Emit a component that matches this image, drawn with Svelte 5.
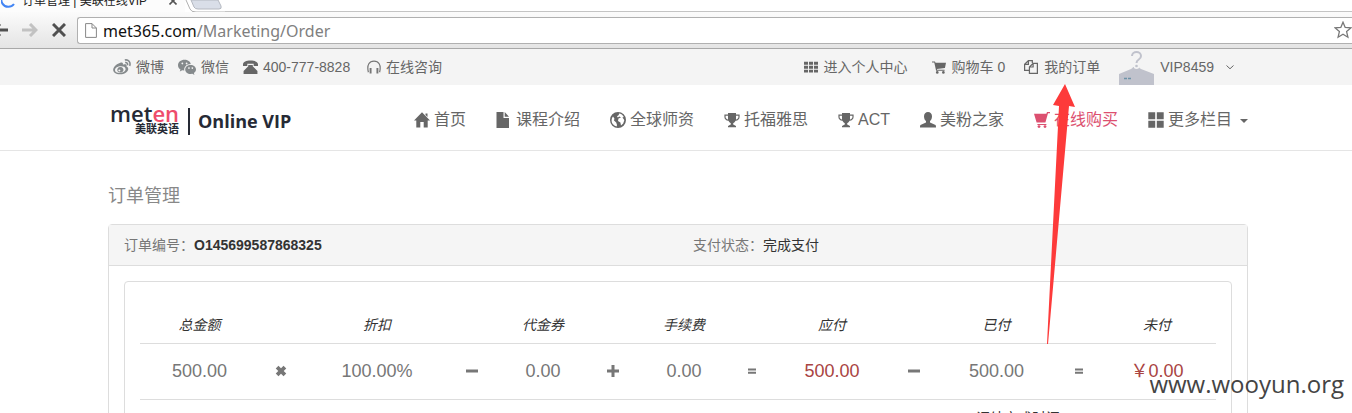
<script>
  const nav = [
    { icon: 'home', label: '首页' },
    { icon: 'file', label: '课程介绍' },
    { icon: 'globe', label: '全球师资' },
    { icon: 'trophy', label: '托福雅思' },
    { icon: 'trophy', label: 'ACT' },
    { icon: 'user', label: '美粉之家' },
    { icon: 'cart', label: '在线购买', active: true },
    { icon: 'large', label: '更多栏目', more: true }
  ];

  const columns = [
    { width: 119, head: '总金额', value: '500.00' },
    { width: 44, op: 'times' },
    { width: 148, head: '折扣', value: '100.00%' },
    { width: 42, op: 'minus' },
    { width: 100, head: '代金券', value: '0.00' },
    { width: 40, op: 'plus' },
    { width: 102, head: '手续费', value: '0.00' },
    { width: 34, op: 'equals' },
    { width: 126, head: '应付', value: '500.00', due: true },
    { width: 38, op: 'minus' },
    { width: 127, head: '已付', value: '500.00' },
    { width: 38, op: 'equals' },
    { width: 118, head: '未付', value: '￥0.00', due: true }
  ];
</script>

{#snippet icon(name)}
  <svg class="icon {name}" viewBox="0 0 16 16" aria-hidden="true">
    {#if name === 'home'}
      <path d="M8 0.3 L16 8.6 H13.7 V15.5 H9.7 V10 H6.3 V15.5 H2.3 V8.6 H0 Z M11.5 1.5 H13.5 V5 L11.5 3 Z" />
    {:else if name === 'file'}
      <path d="M0.5 0 H7.5 V6 H13 V16 H0.5 Z M8.7 0 L13 4.8 H8.7 Z" />
    {:else if name === 'globe'}
      <path fill-rule="evenodd" d="M8 0 A8 8 0 1 0 8 16 A8 8 0 1 0 8 0 Z M9 1.6 C11 1.8 13 3.2 13.8 5 L12.4 5.6 L13.6 7 L14.3 8.2 L13.2 11.4 L11 13.4 L10.4 10.6 L8 9 L8.5 6.6 L11 5.5 L9.4 4.6 L7.8 5.4 L7 4.2 L8.8 3 Z M3 4.6 L4.4 6.6 L4 8.6 L6.2 10.4 L7 13 L6.6 14.4 C3.4 13.6 1.4 11 1.6 8 C1.7 6.7 2.2 5.5 3 4.6 Z" />
    {:else if name === 'trophy'}
      <path fill-rule="evenodd" d="M4 1 H12 V2.6 H15.6 V5 C15.6 7 14 8.6 11.6 8.8 C11 10 10.2 10.8 9.2 11.2 V12.6 L12 14 V15.2 H4 V14 L6.8 12.6 V11.2 C5.8 10.8 5 10 4.4 8.8 C2 8.6 0.4 7 0.4 5 V2.6 H4 Z M1.6 3.8 V5 C1.6 6.3 2.6 7.2 4 7.5 V3.8 Z M14.4 3.8 H12 V7.5 C13.4 7.2 14.4 6.3 14.4 5 Z" />
    {:else if name === 'user'}
      <path d="M8 0 C10.4 0 12 1.7 12 4.2 C12 6.4 11.2 8.2 10 9 V10.6 L15 12.8 C15.8 13.2 16 13.8 16 15.4 H0 C0 13.8 0.2 13.2 1 12.8 L6 10.6 V9 C4.8 8.2 4 6.4 4 4.2 C4 1.7 5.6 0 8 0 Z" />
    {:else if name === 'cart'}
      <path d="M0 1.8 H12.4 L13 0 H16 V1.3 H14 L11.4 10.6 H2.6 Z M3.4 12 H12.4 V13 H3.4 Z" />
      <circle cx="5" cy="14.6" r="1.4" /><circle cx="11" cy="14.6" r="1.4" />
    {:else if name === 'large'}
      <path d="M0.3 0.3 H7.2 V7.2 H0.3 Z M8.8 0.3 H15.7 V7.2 H8.8 Z M0.3 8.8 H7.2 V15.7 H0.3 Z M8.8 8.8 H15.7 V15.7 H8.8 Z" />
    {:else if name === 'grid'}
      <path d="M0 2H4.6V5.4H0ZM5.7 2H10.3V5.4H5.7ZM11.4 2H16V5.4H11.4ZM0 6.5H4.6V9.9H0ZM5.7 6.5H10.3V9.9H5.7ZM11.4 6.5H16V9.9H11.4ZM0 11H4.6V14.4H0ZM5.7 11H10.3V14.4H5.7ZM11.4 11H16V14.4H11.4Z" />
    {:else if name === 'basket'}
      <path d="M0 1.6 H3.4 L4 3.2 H16 L14.8 9 L5.6 10.2 L5.9 11.2 H14.4 V12.4 H4.7 L2.6 2.8 H0 Z" />
      <circle cx="6" cy="14.2" r="1.5" /><circle cx="13" cy="14.2" r="1.5" />
    {:else if name === 'copy'}
      <path class="line" d="M9.5 3.5 V0.7 H5 L0.7 5 V11.8 H6.2 M5 0.7 V5 H0.7 M6.2 15.3 V8 L10.4 3.8 H15.3 V15.3 Z M10.4 3.8 V8 H6.2" />
    {:else if name === 'phone'}
      <path d="M0 4.6 C0 2 3.6 0.6 8 0.6 S16 2 16 4.6 V6.4 H11.4 V4 H4.6 V6.4 H0 Z M5.6 5.2 H10.4 V6.6 L15.4 11.6 V15 H0.6 V11.6 L5.6 6.6 Z" />
    {:else if name === 'headphones'}
      <path class="line" d="M1.6 14 C-0.6 5 3 1.2 8 1.2 S16.6 5 14.4 14" />
      <path d="M3 9 H5.2 V15.4 H3 Z M10.8 9 H13 V15.4 H10.8 Z" />
    {:else if name === 'weibo'}
      <path fill-rule="evenodd" d="M6.5 4.2 C8 3.6 9.2 4.2 8.8 6 C11 5.2 12.6 5.8 12 7.6 C14 8.4 14 10.4 12.6 12 C10.6 14.4 6 15.2 3 14 C0 12.8 -0.6 10.4 1 8 C2.4 6 4.5 4.9 6.5 4.2 Z M7 7.4 C4 7.4 1.8 8.9 1.8 10.8 S4 13.4 6.6 13.2 S11.4 11.6 11.2 9.8 S9.4 7.4 7 7.4 Z" />
      <path fill-rule="evenodd" d="M6.5 8 A2.8 2.5 0 1 0 6.6 8 Z M5.6 10.2 A0.9 0.8 0 1 0 5.7 10.2 Z" />
      <path class="line" d="M10.5 1.8 C13.6 1 16 4 14.8 7 M10.8 4.1 C12.4 3.7 13.4 5 12.8 6.4" />
    {:else if name === 'wechat'}
      <path fill-rule="evenodd" d="M5.8 1.6 C2.6 1.6 0 3.7 0 6.4 C0 8 0.8 9.3 2.2 10.2 L1.6 12 L3.8 10.9 L5.6 11.2 C5 8 7.6 5.4 11.4 5.4 C11 3.2 8.6 1.6 5.8 1.6 Z M3.8 4 A0.8 0.8 0 1 0 3.9 4 Z M7.6 4 A0.8 0.8 0 1 0 7.7 4 Z" />
      <path fill-rule="evenodd" d="M11.2 6.2 C8.4 6.2 6.4 8 6.4 10.2 S8.4 14.2 11.2 14.2 L12.8 14 L14.6 15 L14.1 13.4 C15.3 12.6 16 11.5 16 10.2 C16 8 13.9 6.2 11.2 6.2 Z M9.7 8.3 A0.7 0.7 0 1 0 9.8 8.3 Z M12.7 8.3 A0.7 0.7 0 1 0 12.8 8.3 Z" />
    {:else if name === 'chevron'}
      <path class="line" d="M1 5 L8 11.5 L15 5" />
    {:else if name === 'times'}
      <path d="M4.6 1 L8 4.4 L11.4 1 L15 4.6 L11.6 8 L15 11.4 L11.4 15 L8 11.6 L4.6 15 L1 11.4 L4.4 8 L1 4.6 Z" />
    {:else if name === 'minus'}
      <path d="M0 6 H16 V10 H0 Z" />
    {:else if name === 'plus'}
      <path d="M0 6 H6 V0 H10 V6 H16 V10 H10 V16 H6 V10 H0 Z" />
    {:else if name === 'equals'}
      <path d="M0 3 H16 V7 H0 Z M0 9.6 H16 V13.6 H0 Z" />
    {/if}
  </svg>
{/snippet}

<div class="page">
  <div class="tabs">
    <svg class="spinner" viewBox="0 0 16 16" aria-hidden="true"><path d="M6 1 A7 7 0 1 0 13 12" /></svg>
    <span class="tab-title">订单管理 | 美联在线VIP</span>
    <button class="tab-close" aria-label="关闭标签页">
      <svg viewBox="0 0 8 8"><path d="M0.5 0.5 L7.5 7.5 M7.5 0.5 L0.5 7.5" /></svg>
    </button>
    <svg class="tab-edge" viewBox="0 0 40 13" aria-hidden="true">
      <path class="new" d="M6 0 L9 7 Q10 9 13 9 H34 Q37 9 36 6 L33 0 Z" />
      <path class="edge" d="M1 0 L5 9 Q6 12 11 12 H40" />
    </svg>
    <span class="strip"></span>
  </div>

  <div class="toolbar">
    <button class="tool back" aria-label="后退"><svg viewBox="0 0 16 14"><path d="M16 7 H2 M8 1 L2 7 L8 13" /></svg></button>
    <button class="tool forward" aria-label="前进"><svg viewBox="0 0 16 14"><path d="M0 7 H14 M8 1 L14 7 L8 13" /></svg></button>
    <button class="tool stop" aria-label="停止"><svg viewBox="0 0 14 14"><path d="M1 1 L13 13 M13 1 L1 13" /></svg></button>
    <div class="address">
      <svg class="doc" viewBox="0 0 12 15" aria-hidden="true"><path d="M0.6 0.6 H7 L11.4 5 V14.4 H0.6 Z M7 0.6 V5 H11.4" /></svg>
      <span class="url">met365.com<span>/Marketing/Order</span></span>
      <svg class="star" viewBox="0 0 18 18" aria-hidden="true"><path d="M9 1.2 L11.2 6.4 L16.8 6.9 L12.6 10.6 L13.9 16.2 L9 13.3 L4.1 16.2 L5.4 10.6 L1.2 6.9 L6.8 6.4 Z" /></svg>
    </div>
  </div>

  <div class="topbar">
    <div class="container bar">
      <div class="contacts">
        <a href="#weibo">{@render icon('weibo')}微博</a>
        <a href="#wechat">{@render icon('wechat')}微信</a>
        <a href="#phone">{@render icon('phone')}<span class="number">400-777-8828</span></a>
        <a href="#consult">{@render icon('headphones')}在线咨询</a>
      </div>
      <div class="account">
        <a href="#center">{@render icon('grid')}进入个人中心</a>
        <a href="#basket">{@render icon('basket')}购物车 0</a>
        <a href="#orders">{@render icon('copy')}我的订单</a>
        <a class="member" href="#member">
          <svg class="avatar" viewBox="0 0 35 35" aria-hidden="true">
            <path class="body" d="M0 35 V24 L12 19 Q14 18 14 17 H20 Q20 18 22 19 L35 24 V35 Z" />
            <path class="head" d="M13 6 C13 0.5 22 0.5 22 6 C22 10 17.5 9 17.5 13" />
            <circle class="halo" cx="17.5" cy="16" r="3" /><circle class="dot" cx="17.5" cy="16" r="1.3" />
            <path class="tag" d="M5 28.5 H8 M9 28.5 H12" />
          </svg>
          VIP8459
          {@render icon('chevron')}
        </a>
      </div>
    </div>
  </div>

  <header>
    <div class="container bar">
      <a class="logo" href="#home">
        <span class="brand">
          <span class="meten">met<b>en</b></span>
          <span class="cn">美联英语</span>
        </span>
        <span class="rule"></span>
        <span class="online">Online VIP</span>
      </a>
      <nav>
        {#each nav as item}
          <a href="#nav" class:active={item.active}>
            {@render icon(item.icon)}{item.label}
            {#if item.more}<span class="caret"></span>{/if}
          </a>
        {/each}
      </nav>
    </div>
  </header>

  <main class="container">
    <h1>订单管理</h1>
    <section class="panel">
      <div class="panel-head">
        <div>订单编号：<strong>O145699587868325</strong></div>
        <div>支付状态：<em>完成支付</em></div>
      </div>
      <div class="panel-body">
        <div class="well">
          <table>
            <colgroup>
              {#each columns as c}<col style="width: {c.width}px" />{/each}
            </colgroup>
            <thead>
              <tr>{#each columns as c}<th>{c.head ?? ''}</th>{/each}</tr>
            </thead>
            <tbody>
              <tr>
                {#each columns as c}
                  <td class:due={c.due}>{#if c.op}{@render icon(c.op)}{:else}{c.value}{/if}</td>
                {/each}
              </tr>
            </tbody>
          </table>
          <div class="finish">调结完成时间</div>
        </div>
      </div>
    </section>
  </main>

  <svg class="arrow" viewBox="0 0 30 260" aria-hidden="true">
    <path d="M18 0 L28 23 L22 22 L1 260 H0 L12 22 L6 21 Z" />
  </svg>
  <div class="watermark">www.wooyun.org</div>
</div>

<style>
  :global(body) { margin: 0; background: #fff; }
  .page {
    position: relative;
    height: 100vh;
    overflow: hidden;
    font-family: "Liberation Sans", "Noto Sans CJK SC", sans-serif;
    font-size: 14px;
    line-height: 20px;
    color: #333;
  }
  .page * { box-sizing: border-box; }
  a { color: #666; text-decoration: none; }
  button { border: 0; padding: 0; background: none; }
  svg { display: block; flex: none; }
  .icon { width: 16px; height: 16px; fill: currentColor; }
  .icon .line { fill: none; stroke: currentColor; stroke-width: 1.4; }

  .tabs { display: flex; align-items: flex-start; height: 12px; overflow: hidden; background: #fcfcfc; }
  .spinner { width: 16px; height: 16px; margin: -8px 0 0 1px; fill: none; stroke: #4285f4; stroke-width: 2; }
  .tab-title { margin: -9px 0 0 5px; font-size: 12px; white-space: nowrap; color: #222; }
  .tab-close { margin: -3px 0 0 22px; }
  .tab-close svg { width: 8px; height: 8px; fill: none; stroke: #555; stroke-width: 1.6; }
  .tab-edge { width: 40px; height: 13px; margin-left: 8px; background: #fff; }
  .tab-edge .new { fill: #d9dee8; stroke: #b4b8c0; }
  .tab-edge .edge { fill: none; stroke: #b0b0b0; }
  .strip { flex: 1; height: 12px; background: #fff; border-bottom: 1px solid #c4c4c4; }

  .toolbar {
    display: flex;
    align-items: center;
    height: 37px;
    background: linear-gradient(#fbfbfb, #e4e4e4);
    border-bottom: 1px solid #a8a8a8;
  }
  .tool svg { fill: none; stroke: #505050; stroke-width: 3; }
  .back svg, .forward svg { width: 16px; height: 14px; }
  .back { margin-left: -8px; }
  .forward { margin-left: 14px; }
  .forward svg { stroke: #c2c2c2; }
  .stop { margin-left: 14px; }
  .stop svg { width: 14px; height: 14px; }
  .address {
    display: flex;
    align-items: center;
    flex: 1;
    height: 27px;
    margin-left: 11px;
    padding-left: 7px;
    background: #fff;
    border: 1px solid #b0b0b0;
    border-right: 0;
    border-radius: 3px 0 0 3px;
  }
  .doc { width: 12px; height: 15px; fill: none; stroke: #888; }
  .url { flex: 1; margin-left: 6px; padding-top: 1px; font: 16px/24px "Noto Sans", sans-serif; color: #111; }
  .url span { color: #808080; }
  .star { width: 18px; height: 18px; fill: none; stroke: #777; stroke-width: 1.3; }

  .container { max-width: 1140px; margin: 0 auto; position: relative; left: 2px; }
  .bar { display: flex; align-items: center; justify-content: space-between; }
  .topbar { background: #f4f4f4; }
  .topbar .bar { height: 36px; padding: 0 14px 0 5px; }
  .contacts, .account, .topbar a { display: flex; align-items: center; white-space: nowrap; }
  .topbar a { gap: 5px; }
  .contacts { gap: 14px; }
  .contacts .icon { width: 18px; height: 18px; color: #858a8c; }
  .contacts .phone { width: 15px; height: 15px; color: #666; }
  .contacts .headphones { width: 14px; height: 16px; color: #777; }
  .number { min-width: 90px; }
  .account { gap: 19px; }
  .topbar .account a { gap: 6px; }
  .account .icon { width: 14px; height: 14px; }
  .account a:first-child { margin-right: 5px; }
  .account .chevron { width: 8px; height: 10px; margin-left: 6px; }
  .account .chevron .line { stroke-width: 2; }
  .avatar { width: 35px; height: 35px; }
  .avatar .body { fill: #c0c2cc; }
  .avatar .head { fill: none; stroke: #c0c2cc; stroke-width: 2; }
  .avatar .halo { fill: #f4f4f4; }
  .avatar .dot { fill: #c0c2cc; }
  .avatar .tag { stroke: #6d93a8; stroke-width: 1.4; }

  header { border-bottom: 1px solid #e5e5e5; background: #fff; }
  header .bar { height: 65px; padding: 4px 0 0 2px; }
  .logo { display: flex; align-items: center; color: #262a35; }
  .brand { display: flex; flex-direction: column; align-items: flex-end; }
  .meten { font: 600 22px/18px "Open Sans", sans-serif; }
  .meten b { font-weight: 600; color: #ee4d6c; }
  .cn { font-weight: 700; font-size: 11px; line-height: 14px; }
  .rule { width: 2px; height: 27px; margin: 4px 8px 0 9px; background: #262a35; }
  .online { margin-top: 3px; font: 700 18px/24px "Open Sans", sans-serif; }
  nav { display: flex; align-items: center; gap: 30px; font-size: 16px; }
  nav a { display: flex; align-items: center; gap: 4px; white-space: nowrap; }
  nav a.active { color: #dc5070; }
  .caret { margin: 3px 0 0 4px; border: 4px solid transparent; border-top-color: #666; border-bottom: 0; }

  h1 { margin: 0; padding: 33px 0 16px; font-size: 18px; line-height: 24px; font-weight: 400; color: #888; }
  .panel { border: 1px solid #ddd; border-radius: 4px; }
  .panel-head {
    display: grid;
    grid-template-columns: 1fr 1fr;
    gap: 30px;
    padding: 10px 15px;
    background: #f5f5f5;
    border-bottom: 1px solid #ddd;
    color: #777;
  }
  .panel-head strong, .panel-head em { color: #333; font-style: normal; }
  .panel-body { padding: 15px; }
  .well { padding: 15px 15px 40px; border: 1px solid #ddd; border-radius: 4px; }
  table { width: 100%; table-layout: fixed; border-collapse: collapse; }
  th { padding: 18px 0 8px; font-weight: 400; font-style: italic; border-bottom: 1px solid #ddd; }
  td { height: 56px; padding: 0 0 2px; border-bottom: 1px solid #ddd; text-align: center; font-size: 18px; color: #777; }
  td.due { color: #a94442; }
  td .icon { margin: 0 auto; width: 12px; height: 12px; }
  td .equals { width: 8px; height: 10px; }
  .finish { padding: 8px 156px 0 0; text-align: right; }

  .arrow { position: absolute; left: 1047px; top: 84px; width: 30px; height: 260px; fill: #fd3a3a; }
  .watermark {
    position: absolute;
    right: 8px;
    bottom: 12px;
    font: 24px/34px "Open Sans", sans-serif;
    color: #444;
  }
</style>
